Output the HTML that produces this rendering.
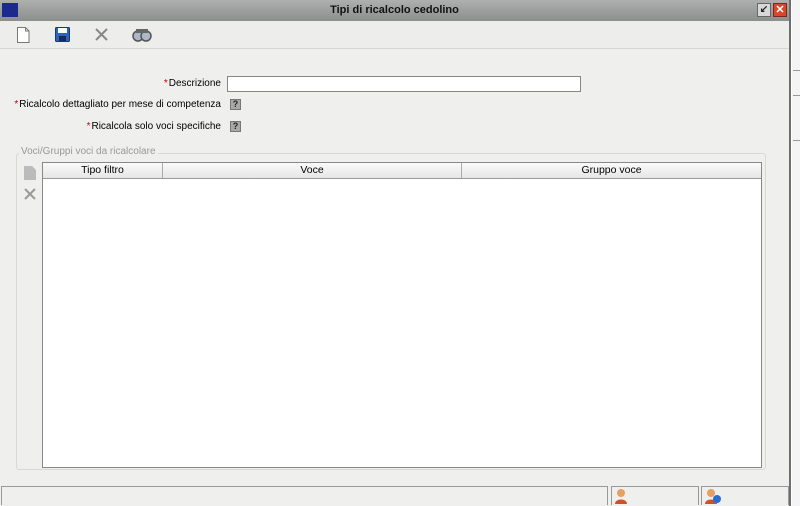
<!DOCTYPE html>
<html><head><style>
*{margin:0;padding:0;box-sizing:border-box}
body{width:800px;height:506px;background:#fff;font-family:"Liberation Sans",sans-serif;font-size:11px;color:#000;position:relative;overflow:hidden}
.win{position:absolute;left:0;top:0;width:791px;height:506px;background:#efefee;border-right:2px solid #6e6e6e}
.title{position:absolute;left:0;top:0;width:789px;height:21px;background:linear-gradient(#aeb0b0,#8c8e8e);text-align:center;font-weight:bold;font-size:11px;line-height:21px;color:#111}
.tb{position:absolute;top:21px;left:0;width:789px;height:28px;background:#ededeb;border-bottom:1px solid #d6d6d4}
.lbl{position:absolute;text-align:right;font-size:10px}
.lbl b{color:#c00;font-weight:normal;margin-right:1px}
.q{position:absolute;width:11px;height:11px;background:#a9a9a9;border:1px solid #777;font-size:9px;font-weight:bold;text-align:center;line-height:9px;color:#222}
.fs{position:absolute;left:16px;top:153px;width:750px;height:317px;border:1px solid #d8d8d8;border-radius:3px}
.grid{position:absolute;left:42px;top:162px;width:720px;height:306px;background:#fff;border:1px solid #888}
.hd{height:16px;background:linear-gradient(#fafafa,#e6e6e6);border-bottom:1px solid #999;display:flex;font-size:10.5px;line-height:15px}
.hd div{text-align:center;border-right:1px solid #aaa}
.sb{position:absolute;top:486px;height:19px;border:1px solid #999;border-bottom:none;background:#efefee}
</style></head><body>
<div style="position:absolute;left:792px;top:0;width:8px;height:506px;background:#f4f4f4"></div>
<div style="position:absolute;left:793px;top:70px;width:7px;height:1px;background:#999"></div>
<div style="position:absolute;left:793px;top:95px;width:7px;height:1px;background:#999"></div>
<div style="position:absolute;left:793px;top:140px;width:7px;height:1px;background:#999"></div>
<div class="win">
<div class="title">Tipi di ricalcolo cedolino
<div style="position:absolute;left:2px;top:3px;width:16px;height:14px;background:#1b2a8c"></div>
<div style="position:absolute;left:757px;top:3px;width:14px;height:14px;background:#d8d8d8;border:1px solid #666;font-size:10px;line-height:12px;color:#222">↙</div>
<div style="position:absolute;left:773px;top:3px;width:14px;height:14px;background:#d9462e;border:1px solid #7a2a1a;color:#fff;font-size:11px;line-height:12px">✕</div>
</div>
<div class="tb">
<svg style="position:absolute;left:16px;top:6px" width="14" height="16"><path d="M1.5 .5h8l3.5 3.5v11.5h-11.5z" fill="#fff" stroke="#777"/><path d="M9.5 .5v3.5h3.5" fill="none" stroke="#777"/></svg>
<svg style="position:absolute;left:55px;top:6px" width="15" height="15"><rect x=".5" y=".5" width="14" height="14" rx="1" fill="#2d63b8" stroke="#143a7a"/><rect x="3" y="1" width="9" height="5" fill="#fff"/><rect x="4" y="9" width="7" height="5" fill="#1a2a50"/></svg>
<svg style="position:absolute;left:95px;top:7px" width="13" height="13"><path d="M1 1L12 12M12 1L1 12" stroke="#888" stroke-width="2"/></svg>
<svg style="position:absolute;left:132px;top:7px" width="20" height="14"><circle cx="6" cy="8" r="5" fill="#aab8c8" stroke="#555" stroke-width="1.5"/><circle cx="14" cy="8" r="5" fill="#aab8c8" stroke="#555" stroke-width="1.5"/><rect x="4" y="1" width="12" height="4" fill="#666"/></svg>
</div>
<div class="lbl" style="right:568px;top:78px"><b>*</b>Descrizione</div>
<div style="position:absolute;left:227px;top:76px;width:354px;height:16px;background:#fff;border:1px solid #888"></div>
<div class="lbl" style="right:568px;top:99px"><b>*</b>Ricalcolo dettagliato per mese di competenza</div>
<div class="q" style="left:230px;top:99px">?</div>
<div class="lbl" style="right:568px;top:121px"><b>*</b>Ricalcola solo voci specifiche</div>
<div class="q" style="left:230px;top:121px">?</div>
<div class="fs"></div>
<div style="position:absolute;left:19px;top:146px;background:#efefee;color:#999;font-size:10px;padding:0 2px">Voci/Gruppi voci da ricalcolare</div>
<svg style="position:absolute;left:24px;top:166px" width="12" height="14"><path d="M0 0h8l4 4v10h-12z" fill="#bbb"/></svg>
<svg style="position:absolute;left:24px;top:188px" width="12" height="12"><path d="M1 1L11 11M11 1L1 11" stroke="#999" stroke-width="2"/></svg>
<div class="grid"><div class="hd"><div style="width:120px">Tipo filtro</div><div style="width:299px">Voce</div><div style="width:299px;border:none">Gruppo voce</div></div></div>
<div class="sb" style="left:1px;width:607px"></div>
<div class="sb" style="left:611px;width:88px"><svg style="position:absolute;left:3px;top:1px" width="14" height="16"><circle cx="6" cy="5" r="4" fill="#e8a060"/><path d="M0 16c0-6 12-6 12 0z" fill="#d0502a"/></svg></div>
<div class="sb" style="left:701px;width:88px"><svg style="position:absolute;left:3px;top:1px" width="16" height="16"><circle cx="6" cy="5" r="4" fill="#e8a060"/><path d="M0 16c0-6 12-6 12 0z" fill="#d0502a"/><circle cx="12" cy="11" r="4" fill="#2a6fd0"/></svg></div>
</div>
</body></html>
